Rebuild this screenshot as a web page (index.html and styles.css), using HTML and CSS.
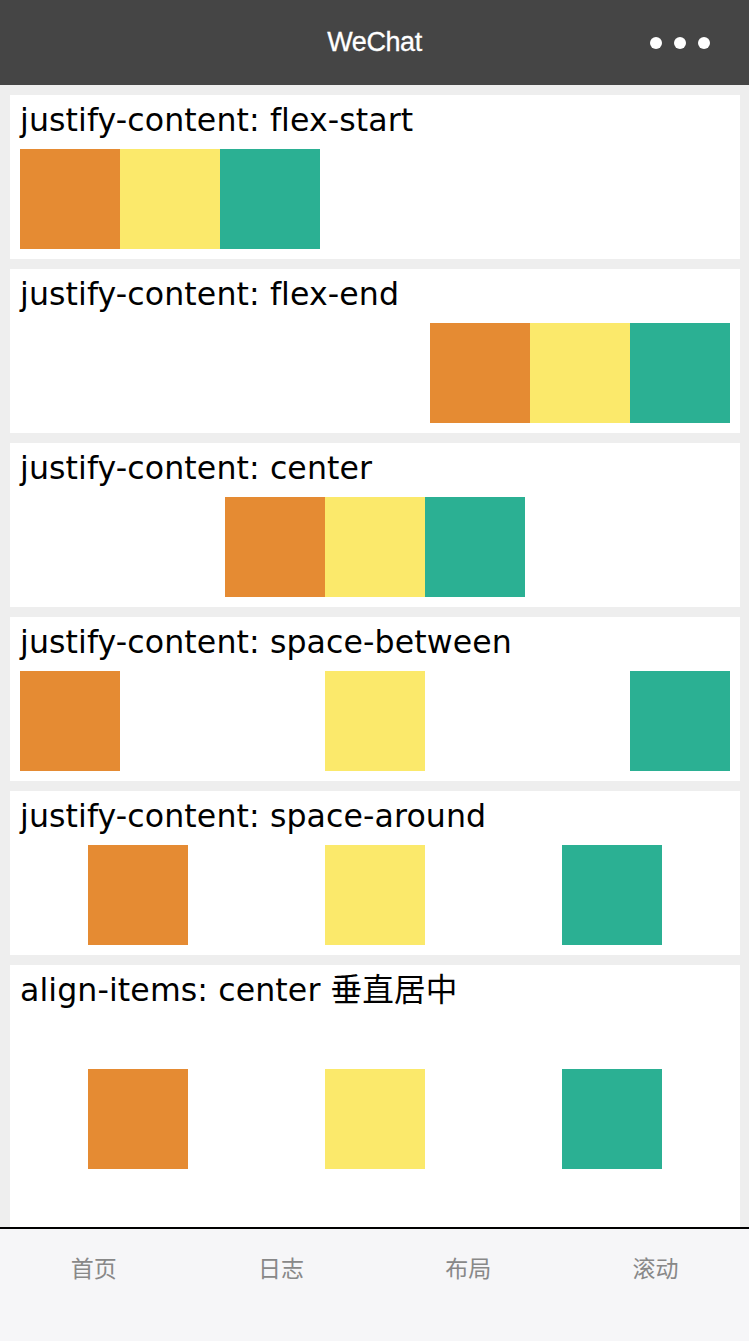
FILE: index.html
```html
<!DOCTYPE html>
<html lang="zh">
<head>
<meta charset="utf-8">
<title>WeChat</title>
<link rel="stylesheet" href="styles.css">
</head>
<body>
<header class="navbar">
  <div></div>
  <div class="nav-title">WeChat</div>
  <div class="nav-dots"><span></span><span></span><span></span></div>
</header>
<main class="page">
  <section class="card">
    <div class="title">justify-content: flex-start</div>
    <div class="row start"><div class="box orange"></div><div class="box yellow"></div><div class="box teal"></div></div>
  </section>
  <section class="card">
    <div class="title">justify-content: flex-end</div>
    <div class="row end"><div class="box orange"></div><div class="box yellow"></div><div class="box teal"></div></div>
  </section>
  <section class="card">
    <div class="title">justify-content: center</div>
    <div class="row center"><div class="box orange"></div><div class="box yellow"></div><div class="box teal"></div></div>
  </section>
  <section class="card">
    <div class="title">justify-content: space-between</div>
    <div class="row between"><div class="box orange"></div><div class="box yellow"></div><div class="box teal"></div></div>
  </section>
  <section class="card">
    <div class="title">justify-content: space-around</div>
    <div class="row around"><div class="box orange"></div><div class="box yellow"></div><div class="box teal"></div></div>
  </section>
  <section class="card">
    <div class="title">align-items: center 垂直居中</div>
    <div class="row around tall"><div class="box orange"></div><div class="box yellow"></div><div class="box teal"></div></div>
  </section>
</main>
<nav class="tabbar">
  <div class="tab">首页</div>
  <div class="tab">日志</div>
  <div class="tab">布局</div>
  <div class="tab">滚动</div>
</nav>
</body>
</html>
```
FILE: styles.css
```css
html, body {
  margin: 0;
  padding: 0;
}
body {
  background: #eeeeee;
  font-family: "DejaVu Sans", "Noto Sans CJK SC", sans-serif;
  color: #000;
}
.navbar {
  height: 85px;
  background: #454545;
  display: grid;
  grid-template-columns: 1fr auto 1fr;
  align-items: center;
}
.nav-title {
  font-family: "Liberation Sans", Arial, sans-serif;
  font-size: 27px;
  color: #fff;
  letter-spacing: -0.4px;
  -webkit-text-stroke: 0.3px #fff;
}
.nav-dots {
  justify-self: end;
  display: flex;
  gap: 12px;
  padding-right: 39px;
}
.nav-dots span {
  width: 12px;
  height: 12px;
  border-radius: 50%;
  background: #fff;
}
.page {
  display: flex;
  flex-direction: column;
  gap: 10px;
  padding: 10px 9px 120px 10px;
}
.card {
  background: #fff;
  padding: 0 10px 10px 10px;
}
.title {
  font-size: 31.6px;
  font-weight: normal;
  letter-spacing: 0.1px;
  line-height: 50px;
  height: 54px;
  white-space: nowrap;
}
.row {
  display: flex;
}
.row.start { justify-content: flex-start; }
.row.end { justify-content: flex-end; }
.row.center { justify-content: center; }
.row.between { justify-content: space-between; }
.row.around { justify-content: space-around; }
.row.tall {
  height: 200px;
  align-items: center;
}
.box {
  width: 100px;
  height: 100px;
}
.orange { background: #e58b33; }
.yellow { background: #fbe96b; }
.teal { background: #2bb093; }
.tabbar {
  position: fixed;
  left: 0;
  right: 0;
  bottom: 0;
  height: 112px;
  border-top: 2px solid #000;
  background: #f6f6f8;
  display: grid;
  grid-template-columns: repeat(4, 1fr);
}
.tab {
  text-align: center;
  font-family: "Noto Sans CJK SC", sans-serif;
  font-size: 23px;
  line-height: 24px;
  padding-top: 26px;
  color: #888;
}
```
